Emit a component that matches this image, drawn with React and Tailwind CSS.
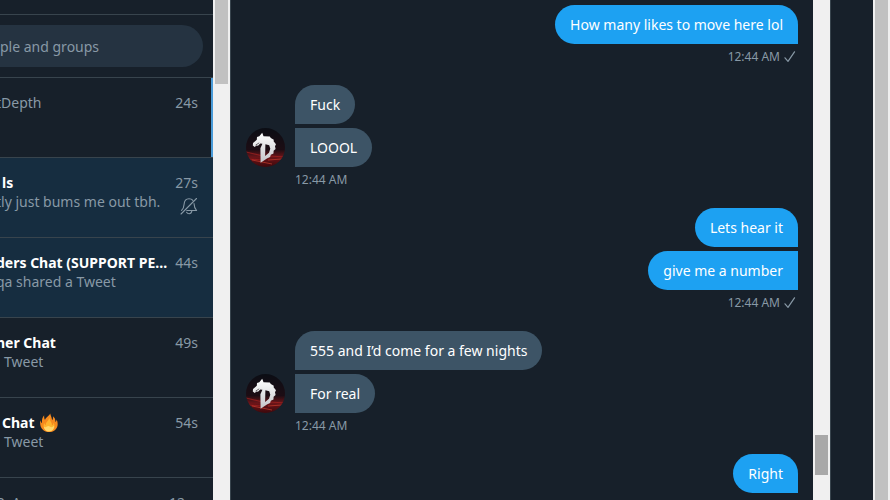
import React from "react";

const conversations = [
  { id: 1, name: "tDepth", time: "24s", preview: "", state: "selected", clipName: true },
  { id: 2, name: "ls", time: "27s", preview: "tly just bums me out tbh.", state: "unread", muted: true, clipPreview: true },
  { id: 3, name: "ders Chat (SUPPORT PE...", time: "44s", preview: "qa shared a Tweet", state: "unread", clipName: true, clipPreview: true },
  { id: 4, name: "ner Chat", time: "49s", preview: "Tweet", state: "read", clipName: true },
  { id: 5, name: "Chat", time: "54s", preview: "Tweet", state: "read", fire: true },
  { id: 6, name: "R. A", time: "12m", preview: "", state: "plain", clipName: true },
];

const groups = [
  { id: 1, mine: true, messages: ["How many likes to move here lol"] },
  { id: 2, mine: false, messages: ["Fuck", "LOOOL"] },
  { id: 3, mine: true, messages: ["Lets hear it", "give me a number"] },
  { id: 4, mine: false, messages: ["555 and I’d come for a few nights", "For real"] },
  { id: 5, mine: true, messages: ["Right"] },
];

function MutedBell() {
  return (
    <svg viewBox="0 0 18 18" className="h-[18px] w-[18px] shrink-0" fill="none" stroke="#8899a6" strokeWidth="1.1" strokeLinecap="round" strokeLinejoin="round" role="img" aria-label="Muted">
      <path d="M1 17 16.500 1.500" />
      <path d="M1.600 13.300C3.800 11.200 4 9.500 4.100 7.200 4.300 3.900 6.100 1.700 9 1.700c1.700 0 3 .6 3.900 1.700" />
      <path d="M14 6.600c.1 3.300.5 4.600 2.600 6.900H6.800" />
      <path d="M6.600 15.200c.5 1 1.400 1.500 2.600 1.500 1.300 0 2.300-.8 2.600-2.500" />
    </svg>
  );
}

function Fire() {
  return (
    <svg viewBox="0 0 20 20" className="h-5 w-5 shrink-0" role="img" aria-label="Fire">
      <path fill="#f68a1e" d="M11.200.6c.5 2.600 1.700 4 1.900 6.700.9-.9 1.200-2.300.9-4 2.100 1.700 2.500 3.700 2.300 5.600.9-.5 1.300-1.300 1.400-2.500 2.900 6.900-.9 12.600-7.400 12.600C4.300 19 .100 14.400 1.300 7.300c.4 1.400.9 2.300 1.700 2.900C2.700 7.300 3.100 4.500 5.200 2.200c-.2 2 0 3.700.8 4.900.7-3 4-3.500 5.200-6.500Z" />
      <path fill="#ffb52e" d="M10.700 4.800c-.2 3.600 2.600 4.300 2.300 7.700 1-.4 1.500-1.400 1.600-2.900 2.500 5-.3 8.700-4.400 8.700-4.200 0-6.800-3.700-5-8.500.3 1.300.8 2.100 1.600 2.500-.2-3.400 2.700-4.300 3.900-7.500Z" />
      <path fill="#ffd86b" d="M4.800 13.500c1.200 1 2.200.8 3 0 1.200-.9 2.300-.7 3.300.2 1.200.8 2.600.6 4-.9.100 3.500-1.900 5.700-5.100 5.700-2.900 0-5-1.900-5.200-5Z" />
    </svg>
  );
}

function Avatar() {
  return (
    <svg viewBox="0 0 39 39" className="h-[39px] w-[39px] shrink-0" role="img" aria-label="Profile picture">
      <defs>
        <clipPath id="disc"><circle cx="19.500" cy="19.500" r="19.500" /></clipPath>
        <linearGradient id="glow" x1="0" y1="0" x2="0" y2="1">
          <stop offset="0" stopColor="#0b0d14" />
          <stop offset=".55" stopColor="#1c0d14" />
          <stop offset=".75" stopColor="#6d161a" />
          <stop offset="1" stopColor="#3d090d" />
        </linearGradient>
        <linearGradient id="silver" x1="0" y1="0" x2="0" y2="1">
          <stop offset="0" stopColor="#fff" />
          <stop offset="1" stopColor="#c3c5c9" />
        </linearGradient>
      </defs>
      <g clipPath="url(#disc)">
        <path fill="url(#glow)" d="M0 0h39v39H0z" />
        <path d="m0 24 15 3.500M24 28l15 1M2 31l13 1" stroke="#b32623" strokeWidth="1.200" opacity=".6" />
        <path d="m6 32 20 4M22 32l14-1" stroke="#e14835" strokeWidth=".8" opacity=".7" />
      </g>
      <path
        fill="url(#silver)"
        fillRule="evenodd"
        d="m16.200 4.700 1.300 3.500 6.300.2 1 1.500 3 1.800-.2 1.600 2.400 3-1 2 .6 2.600-2 1.800-.1 2.700-2.700 1.300-.7 2.200-3.200 1.500-6.300 4.400-.2-14.500 2-4.600-2.100-.2-2.300 2.300-1.500-.3-1.800 1.400-1.900-1.400.2-2.400 3.800-3.400.2-2.800 2.300-.6 2.900-3.600Zm3.200 11.500-.3 11.800 3.900-3.300 1.300-3.900-1.100-3.600-3.800-1Z"
      />
      <path d="m9.600 17.100 3.600-2.200" stroke="#1b1118" strokeWidth=".6" />
    </svg>
  );
}

function Check() {
  return (
    <svg viewBox="0 0 12 12" className="h-3 w-3" fill="none" stroke="#8899a6" strokeWidth="1.200" strokeLinecap="round" strokeLinejoin="round" role="img" aria-label="Sent">
      <path d="m1 6.800 3 3.500 6.500-9.500" />
    </svg>
  );
}

function Conversation({ item }) {
  const bold = item.state !== "selected" && item.state !== "plain";
  return (
    <li>
      <button
        type="button"
        className={
          "flex h-20 w-full flex-col items-stretch justify-start border-b border-[#38444d] pr-[15px] pt-[15px] text-left text-[#8899a6] " +
          (item.state === "unread" ? "bg-[#162d40] " : "") +
          (item.state === "selected" ? "shadow-[inset_-2px_0_0_#4a9bd8]" : "")
        }
      >
        <span className="flex h-[19px] items-center gap-1">
          <span
            className={
              "whitespace-nowrap " +
              (bold ? "font-bold text-white " : "") +
              (item.clipName ? "-ml-1" : "ml-0.5")
            }
          >
            {item.name}
          </span>
          {item.fire && <Fire />}
          <span className="ml-auto shrink-0">{item.time}</span>
        </span>
        {item.preview && (
          <span className="flex h-[19px] items-center justify-between">
            <span className={"whitespace-nowrap " + (item.clipPreview ? "-ml-1" : "ml-1")}>{item.preview}</span>
            {item.muted && <span className="pt-2"><MutedBell /></span>}
          </span>
        )}
      </button>
    </li>
  );
}

function MessageGroup({ group }) {
  const { mine, messages } = group;
  return (
    <li className={"flex flex-col " + (mine ? "items-end" : "items-start")}>
      <div className="flex items-end gap-[10px]">
        {!mine && <Avatar />}
        <div className={"flex flex-col gap-1 " + (mine ? "items-end" : "items-start")}>
          {messages.map((text, i) => (
            <p
              key={text}
              className={
                "px-[15px] py-[10px] text-white " +
                (mine
                  ? "rounded-l-[20px] bg-[#1da1f2] " + (i === 0 ? "rounded-tr-[20px]" : "")
                  : "rounded-r-[20px] bg-[#3d5466] " + (i === 0 ? "rounded-tl-[20px]" : ""))
              }
            >
              {text}
            </p>
          ))}
        </div>
      </div>
      <p className={"mt-[5px] flex items-center gap-1 text-xs text-[#8899a6] " + (mine ? "pr-0.5" : "pl-[49px]")}>
        12:44 AM {mine && <Check />}
      </p>
    </li>
  );
}

export default function App() {
  return (
    <div className="flex h-screen overflow-hidden bg-[#17202a] font-['Noto_Sans','Open_Sans',sans-serif] text-sm leading-[19px]">
      <aside className="w-[213px] shrink-0 overflow-hidden">
        <div className="h-[15px] border-b border-[#38444d]" />
        <div className="border-b border-[#38444d] py-[10px] pr-[10px]">
          <input
            type="search"
            aria-label="Search people and groups"
            placeholder="ple and groups"
            className="block h-[42px] w-full rounded-r-full bg-[#253341] pr-4 text-white outline-none placeholder:text-[#8899a6]"
          />
        </div>
        <ul>
          {conversations.map((item) => <Conversation key={item.id} item={item} />)}
        </ul>
      </aside>
      <div className="w-[17px] shrink-0 bg-[#f0f0f0] px-[2px]">
        <div className="h-[84px] bg-[#c1c1c1]" />
      </div>
      <main className="min-w-0 flex-1 overflow-hidden border-l border-[#38444d] pl-[15px] pr-[15px] pt-[5px]">
        <ol className="flex flex-col gap-5">
          {groups.map((group) => <MessageGroup key={group.id} group={group} />)}
        </ol>
      </main>
      <div className="w-[17px] shrink-0 bg-[#f0f0f0] px-[2px] pt-[435px]">
        <div className="h-10 bg-[#a8a8a8]" />
      </div>
      <div className="w-[43px] shrink-0 border-l border-[#38444d]" />
      <div className="w-[17px] shrink-0 bg-[#f0f0f0] px-[2px]">
        <div className="h-full bg-[#c1c1c1]" />
      </div>
    </div>
  );
}
